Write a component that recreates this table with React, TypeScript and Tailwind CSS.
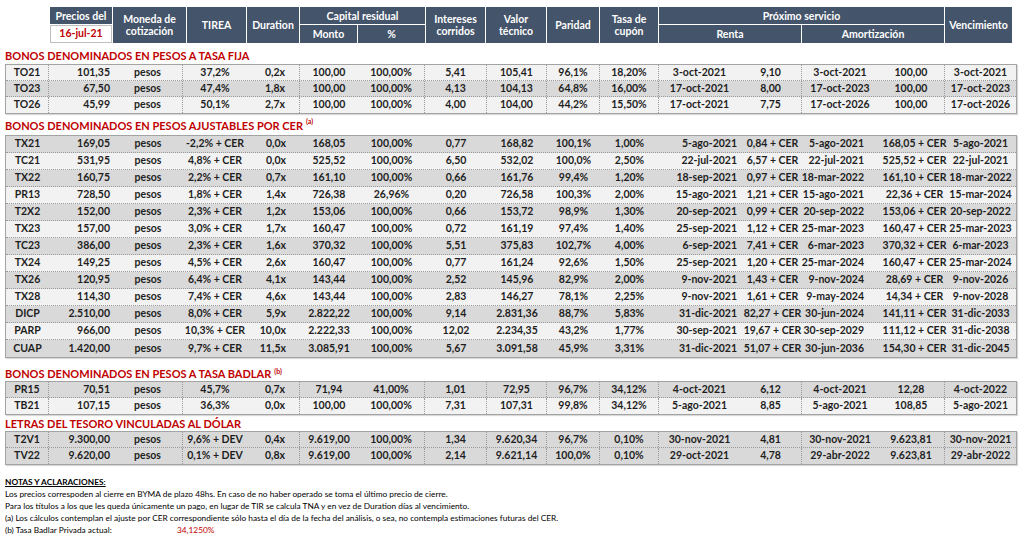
import React from "react";

type Row = string[];

const WC = [
  "w-[43px]",
  "w-[64px]",
  "w-[70px]",
  "w-[64px]",
  "w-[53px]",
  "w-[58px]",
  "w-[67px]",
  "w-[62px]",
  "w-[60px]",
  "w-[53px]",
  "w-[59px]",
  "w-[81px]",
  "w-[62px]",
  "w-[76px]",
  "w-[67px]",
  "w-[71px]",
];

// vertical dotted separators after these column indexes (for "grid" sections)
const VSEP = new Set([0, 2, 4, 6, 7, 8, 9, 10, 12, 14]);

const TO: Row[] = [
  ["TO21", "101,35", "pesos", "37,2%", "0,2x", "100,00", "100,00%", "5,41", "105,41", "96,1%", "18,20%", "3-oct-2021", "9,10", "3-oct-2021", "100,00", "3-oct-2021"],
  ["TO23", "67,50", "pesos", "47,4%", "1,8x", "100,00", "100,00%", "4,13", "104,13", "64,8%", "16,00%", "17-oct-2021", "8,00", "17-oct-2023", "100,00", "17-oct-2023"],
  ["TO26", "45,99", "pesos", "50,1%", "2,7x", "100,00", "100,00%", "4,00", "104,00", "44,2%", "15,50%", "17-oct-2021", "7,75", "17-oct-2026", "100,00", "17-oct-2026"],
];

const CER: Row[] = [
  ["TX21", "169,05", "pesos", "-2,2% + CER", "0,0x", "168,05", "100,00%", "0,77", "168,82", "100,1%", "1,00%", "5-ago-2021", "0,84 + CER", "5-ago-2021", "168,05 + CER", "5-ago-2021"],
  ["TC21", "531,95", "pesos", "4,8% + CER", "0,0x", "525,52", "100,00%", "6,50", "532,02", "100,0%", "2,50%", "22-jul-2021", "6,57 + CER", "22-jul-2021", "525,52 + CER", "22-jul-2021"],
  ["TX22", "160,75", "pesos", "2,2% + CER", "0,7x", "161,10", "100,00%", "0,66", "161,76", "99,4%", "1,20%", "18-sep-2021", "0,97 + CER", "18-mar-2022", "161,10 + CER", "18-mar-2022"],
  ["PR13", "728,50", "pesos", "1,8% + CER", "1,4x", "726,38", "26,96%", "0,20", "726,58", "100,3%", "2,00%", "15-ago-2021", "1,21 + CER", "15-ago-2021", "22,36 + CER", "15-mar-2024"],
  ["T2X2", "152,00", "pesos", "2,3% + CER", "1,2x", "153,06", "100,00%", "0,66", "153,72", "98,9%", "1,30%", "20-sep-2021", "0,99 + CER", "20-sep-2022", "153,06 + CER", "20-sep-2022"],
  ["TX23", "157,00", "pesos", "3,0% + CER", "1,7x", "160,47", "100,00%", "0,72", "161,19", "97,4%", "1,40%", "25-sep-2021", "1,12 + CER", "25-mar-2023", "160,47 + CER", "25-mar-2023"],
  ["TC23", "386,00", "pesos", "2,3% + CER", "1,6x", "370,32", "100,00%", "5,51", "375,83", "102,7%", "4,00%", "6-sep-2021", "7,41 + CER", "6-mar-2023", "370,32 + CER", "6-mar-2023"],
  ["TX24", "149,25", "pesos", "4,5% + CER", "2,6x", "160,47", "100,00%", "0,77", "161,24", "92,6%", "1,50%", "25-sep-2021", "1,20 + CER", "25-mar-2024", "160,47 + CER", "25-mar-2024"],
  ["TX26", "120,95", "pesos", "6,4% + CER", "4,1x", "143,44", "100,00%", "2,52", "145,96", "82,9%", "2,00%", "9-nov-2021", "1,43 + CER", "9-nov-2024", "28,69 + CER", "9-nov-2026"],
  ["TX28", "114,30", "pesos", "7,4% + CER", "4,6x", "143,44", "100,00%", "2,83", "146,27", "78,1%", "2,25%", "9-nov-2021", "1,61 + CER", "9-may-2024", "14,34 + CER", "9-nov-2028"],
  ["DICP", "2.510,00", "pesos", "8,0% + CER", "5,9x", "2.822,22", "100,00%", "9,14", "2.831,36", "88,7%", "5,83%", "31-dic-2021", "82,27 + CER", "30-jun-2024", "141,11 + CER", "31-dic-2033"],
  ["PARP", "966,00", "pesos", "10,3% + CER", "10,0x", "2.222,33", "100,00%", "12,02", "2.234,35", "43,2%", "1,77%", "30-sep-2021", "19,67 + CER", "30-sep-2029", "111,12 + CER", "31-dic-2038"],
  ["CUAP", "1.420,00", "pesos", "9,7% + CER", "11,5x", "3.085,91", "100,00%", "5,67", "3.091,58", "45,9%", "3,31%", "31-dic-2021", "51,07 + CER", "30-jun-2036", "154,30 + CER", "31-dic-2045"],
];

const BADLAR: Row[] = [
  ["PR15", "70,51", "pesos", "45,7%", "0,7x", "71,94", "41,00%", "1,01", "72,95", "96,7%", "34,12%", "4-oct-2021", "6,12", "4-oct-2021", "12,28", "4-oct-2022"],
  ["TB21", "107,15", "pesos", "36,3%", "0,0x", "100,00", "100,00%", "7,31", "107,31", "99,8%", "34,12%", "5-ago-2021", "8,85", "5-ago-2021", "108,85", "5-ago-2021"],
];

const DOLAR: Row[] = [
  ["T2V1", "9.300,00", "pesos", "9,6% + DEV", "0,4x", "9.619,00", "100,00%", "1,34", "9.620,34", "96,7%", "0,10%", "30-nov-2021", "4,81", "30-nov-2021", "9.623,81", "30-nov-2021"],
  ["TV22", "9.620,00", "pesos", "0,1% + DEV", "0,8x", "9.619,00", "100,00%", "2,14", "9.621,14", "100,0%", "0,10%", "29-oct-2021", "4,78", "29-abr-2022", "9.623,81", "29-abr-2022"],
];

function alignClass(i: number, cer: boolean): string {
  if (i === 1) return "justify-end pr-[3px]";
  if (i === 4) return "justify-end pr-[14px]";
  if (cer && i === 11) return "justify-end pr-[3px]";
  if (cer && i === 12) return "justify-center pl-[3px]";
  if (cer && i === 13) return "justify-end pr-[14px]";
  if (cer && i === 14) return "justify-center pl-[6px]";
  return "justify-center";
}

function Table({
  rows,
  shades,
  rowH,
  grid,
  cer,
}: {
  rows: Row[];
  shades: boolean[];
  rowH: string;
  grid: boolean;
  cer: boolean;
}) {
  return (
    <div className="w-[1012px] border border-[#a3a3a3] text-[10.5px] font-bold shadow-[1px_1px_1px_rgba(0,0,0,0.15)]">
      {rows.map((r, ri) => (
        <div
          key={ri}
          className={`flex ${rowH} ${shades[ri] ? "bg-[#d9d9d9]" : "bg-[#f2f2f2]"} ${
            ri < rows.length - 1 ? "border-b border-dotted border-[#9a9a9a]" : ""
          }`}
        >
          {r.map((c, ci) => (
            <div
              key={ci}
              className={`flex items-center shrink-0 whitespace-nowrap ${WC[ci]} ${alignClass(ci, cer)} ${
                grid && VSEP.has(ci) ? "border-r border-dotted border-[#9a9a9a]" : ""
              }`}
            >
              {c}
            </div>
          ))}
        </div>
      ))}
    </div>
  );
}

function Title({ children, sup, cls }: { children: React.ReactNode; sup?: string; cls: string }) {
  return (
    <div className={`flex items-center text-[#c00000] font-bold text-[11px] leading-none ${cls}`}>
      <span>{children}</span>
      {sup && <span className="text-[7px] self-start mt-[3px] ml-[3px] font-bold">{sup}</span>}
    </div>
  );
}

function Header() {
  const cell = "bg-[#44546a] text-white font-bold flex items-center justify-center text-center leading-[12px]";
  return (
    <div className="ml-[45px] grid gap-px bg-white text-[10.5px] grid-cols-[62px_73px_59px_52px_57px_67px_59px_60px_52px_58px_142px_142px_67px] grid-rows-[17px_18px]">
      <div className={`${cell} col-start-1 row-start-1`}>Precios del</div>
      <div className="col-start-1 row-start-2 bg-white text-[#c00000] font-bold flex items-center justify-center border border-[#bfbfbf]">
        16-jul-21
      </div>
      <div className={`${cell} col-start-2 row-start-1 row-span-2`}>
        Moneda de
        <br />
        cotización
      </div>
      <div className={`${cell} col-start-3 row-start-1 row-span-2`}>TIREA</div>
      <div className={`${cell} col-start-4 row-start-1 row-span-2`}>Duration</div>
      <div className={`${cell} col-start-5 col-span-2 row-start-1`}>Capital residual</div>
      <div className={`${cell} col-start-5 row-start-2`}>Monto</div>
      <div className={`${cell} col-start-6 row-start-2`}>%</div>
      <div className={`${cell} col-start-7 row-start-1 row-span-2`}>
        Intereses
        <br />
        corridos
      </div>
      <div className={`${cell} col-start-8 row-start-1 row-span-2`}>
        Valor
        <br />
        técnico
      </div>
      <div className={`${cell} col-start-9 row-start-1 row-span-2`}>Paridad</div>
      <div className={`${cell} col-start-10 row-start-1 row-span-2`}>
        Tasa de
        <br />
        cupón
      </div>
      <div className={`${cell} col-start-11 col-span-2 row-start-1`}>Próximo servicio</div>
      <div className={`${cell} col-start-11 row-start-2`}>Renta</div>
      <div className={`${cell} col-start-12 row-start-2`}>Amortización</div>
      <div className={`${cell} col-start-13 row-start-1 row-span-2`}>Vencimiento</div>
    </div>
  );
}

export default function App() {
  return (
    <div className="w-[1024px] h-[546px] bg-white overflow-hidden pl-[5px] pt-[7px] text-[#1e1e1e] font-['Lato','Open_Sans',sans-serif]">
      <Header />
      <Title cls="h-[21px] pt-[3px]">BONOS DENOMINADOS EN PESOS A TASA FIJA</Title>
      <Table rows={TO} shades={[false, true, false]} rowH="h-[16px]" grid cer={false} />
      <Title cls="h-[21px] pt-[1px]" sup="(a)">
        BONOS DENOMINADOS EN PESOS AJUSTABLES POR CER
      </Title>
      <Table
        rows={CER}
        shades={CER.map((_, i) => i % 2 === 0)}
        rowH="h-[17px]"
        grid={false}
        cer
      />
      <Title cls="h-[23px] pt-[7px]" sup="(b)">
        BONOS DENOMINADOS EN PESOS A TASA BADLAR
      </Title>
      <Table rows={BADLAR} shades={[true, false]} rowH="h-[16px]" grid cer={false} />
      <Title cls="h-[16px] pt-[1px]">LETRAS DEL TESORO VINCULADAS AL DÓLAR</Title>
      <Table rows={DOLAR} shades={[true, true]} rowH="h-[16px]" grid cer={false} />
      <div className="mt-[11px] text-[8.3px] leading-[12px] text-black">
        <div className="font-bold underline">NOTAS Y ACLARACIONES:</div>
        <div>
          Los precios correspoden al cierre en BYMA de plazo 48hs. En caso de no haber operado se toma el último precio de
          cierre.
        </div>
        <div>
          Para los títulos a los que les queda únicamente un pago, en lugar de TIR se calcula TNA y en vez de Duration días
          al vencimiento.
        </div>
        <div>
          (a) Los cálculos contemplan el ajuste por CER correspondiente sólo hasta el día de la fecha del análisis, o sea, no
          contempla estimaciones futuras del CER.
        </div>
        <div className="flex">
          <span className="w-[172px]">(b) Tasa Badlar Privada actual:</span>
          <span className="text-[#c00000]">34,1250%</span>
        </div>
      </div>
    </div>
  );
}
